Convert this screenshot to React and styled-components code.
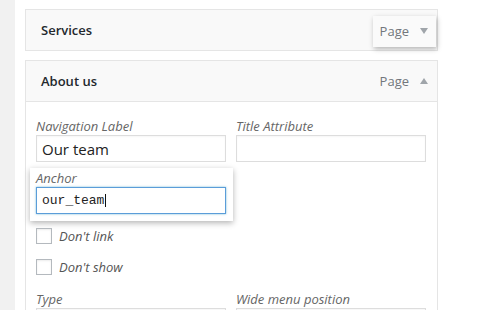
import React from "react";
import styled, { createGlobalStyle } from "styled-components";

const GlobalStyle = createGlobalStyle`
  html, body {
    margin: 0;
    padding: 0;
    background: #fff;
    font-family: "Open Sans", "Noto Sans", sans-serif;
    overflow: hidden;
  }
`;

const Page = styled.div`
  display: flex;
  height: 310px;
  overflow: hidden;
`;

const Gutter = styled.div`
  width: 15px;
  flex: none;
  background: #f1f1f1;
`;

const Main = styled.div`
  width: 413px;
  padding: 9px 0 0 10px;
`;

const Panel = styled.div`
  border: 1px solid #e5e5e5;
  background: #f9f9f9;
  margin-bottom: 9px;
`;

const Header = styled.div`
  height: 40px;
  display: flex;
  align-items: center;
  justify-content: space-between;
  padding: 0 1px 0 15px;
`;

const Title = styled.div`
  font-size: 13px;
  font-weight: 600;
  color: #23282d;
`;

const Type = styled.div`
  display: flex;
  align-items: center;
  height: 31px;
  padding: 0 8px 0 7px;
  font-size: 13px;
  color: #72777c;
  background: ${({ raised }) => (raised ? "#fafafa" : "transparent")};
  box-shadow: ${({ raised }) => (raised ? "1px 2px 5px rgba(0, 0, 0, 0.28)" : "none")};
  margin-top: ${({ raised }) => (raised ? "2px" : "0")};

  svg {
    margin-left: 11px;
  }
`;

const Body = styled.div`
  background: #fff;
  border-top: 1px solid #e5e5e5;
  padding: 15px 11px 0 10px;
  height: 220px;
`;

const Row = styled.div`
  display: grid;
  grid-template-columns: 190px 190px;
  column-gap: 10px;
`;

const Field = styled.div`
  display: flex;
  flex-direction: column;
`;

const Label = styled.div`
  font-size: 13px;
  font-style: italic;
  line-height: 18px;
  color: #666;
`;

const Input = styled.div`
  height: 25px;
  border: 1px solid ${({ focused }) => (focused ? "#5b9dd9" : "#ddd")};
  box-shadow: ${({ focused }) =>
    focused ? "0 0 2px rgba(30, 140, 190, 0.6)" : "inset 0 1px 2px rgba(0, 0, 0, 0.04)"};
  display: flex;
  align-items: center;
  padding: 0 5px;
  font-size: ${({ mono }) => (mono ? "13px" : "15px")};
  font-family: ${({ mono }) => (mono ? '"Liberation Mono", monospace' : "inherit")};
  color: #222;
  background: #fff;
`;

const Caret = styled.span`
  display: inline-block;
  width: 1px;
  height: 13px;
  background: #111;
  margin-left: 1px;
`;

const Popup = styled.div`
  width: 190px;
  margin: 6px 0 0 -6px;
  padding: 1px 7px 7px 6px;
  background: #fff;
  box-shadow: 0 2px 6px rgba(0, 0, 0, 0.3);
`;

const Checks = styled.div`
  display: flex;
  flex-direction: column;
  gap: 15px;
  margin-top: 7px;
`;

const Check = styled.label`
  display: flex;
  align-items: center;
  height: 16px;
  font-size: 13px;
  font-style: italic;
  color: #555;
`;

const Box = styled.span`
  width: 14px;
  height: 14px;
  border: 1px solid #b4b9be;
  background: #fff;
  box-shadow: inset 0 1px 2px rgba(0, 0, 0, 0.08);
  margin-right: 7px;
`;

const LastRow = styled(Row)`
  margin-top: 15px;
`;

const Arrow = ({ up }) => (
  <svg width="8" height="6" viewBox="0 0 8 6">
    <path d={up ? "M0 6 L4 0 L8 6 Z" : "M0 0 L8 0 L4 6 Z"} fill="#a0a5aa" />
  </svg>
);

const App = () => (
  <>
    <GlobalStyle />
    <Page>
      <Gutter />
      <Main>
        <Panel>
          <Header>
            <Title>Services</Title>
            <Type raised>
              Page
              <Arrow />
            </Type>
          </Header>
        </Panel>

        <Panel>
          <Header>
            <Title>About us</Title>
            <Type>
              Page
              <Arrow up />
            </Type>
          </Header>
          <Body>
            <Row>
              <Field>
                <Label>Navigation Label</Label>
                <Input>Our team</Input>
              </Field>
              <Field>
                <Label>Title Attribute</Label>
                <Input />
              </Field>
            </Row>

            <Popup>
              <Label>Anchor</Label>
              <Input focused mono>
                our_team
                <Caret />
              </Input>
            </Popup>

            <Checks>
              <Check>
                <Box />
                Don't link
              </Check>
              <Check>
                <Box />
                Don't show
              </Check>
            </Checks>

            <LastRow>
              <Field>
                <Label>Type</Label>
                <Input />
              </Field>
              <Field>
                <Label>Wide menu position</Label>
                <Input />
              </Field>
            </LastRow>
          </Body>
        </Panel>
      </Main>
    </Page>
  </>
);

export default App;
